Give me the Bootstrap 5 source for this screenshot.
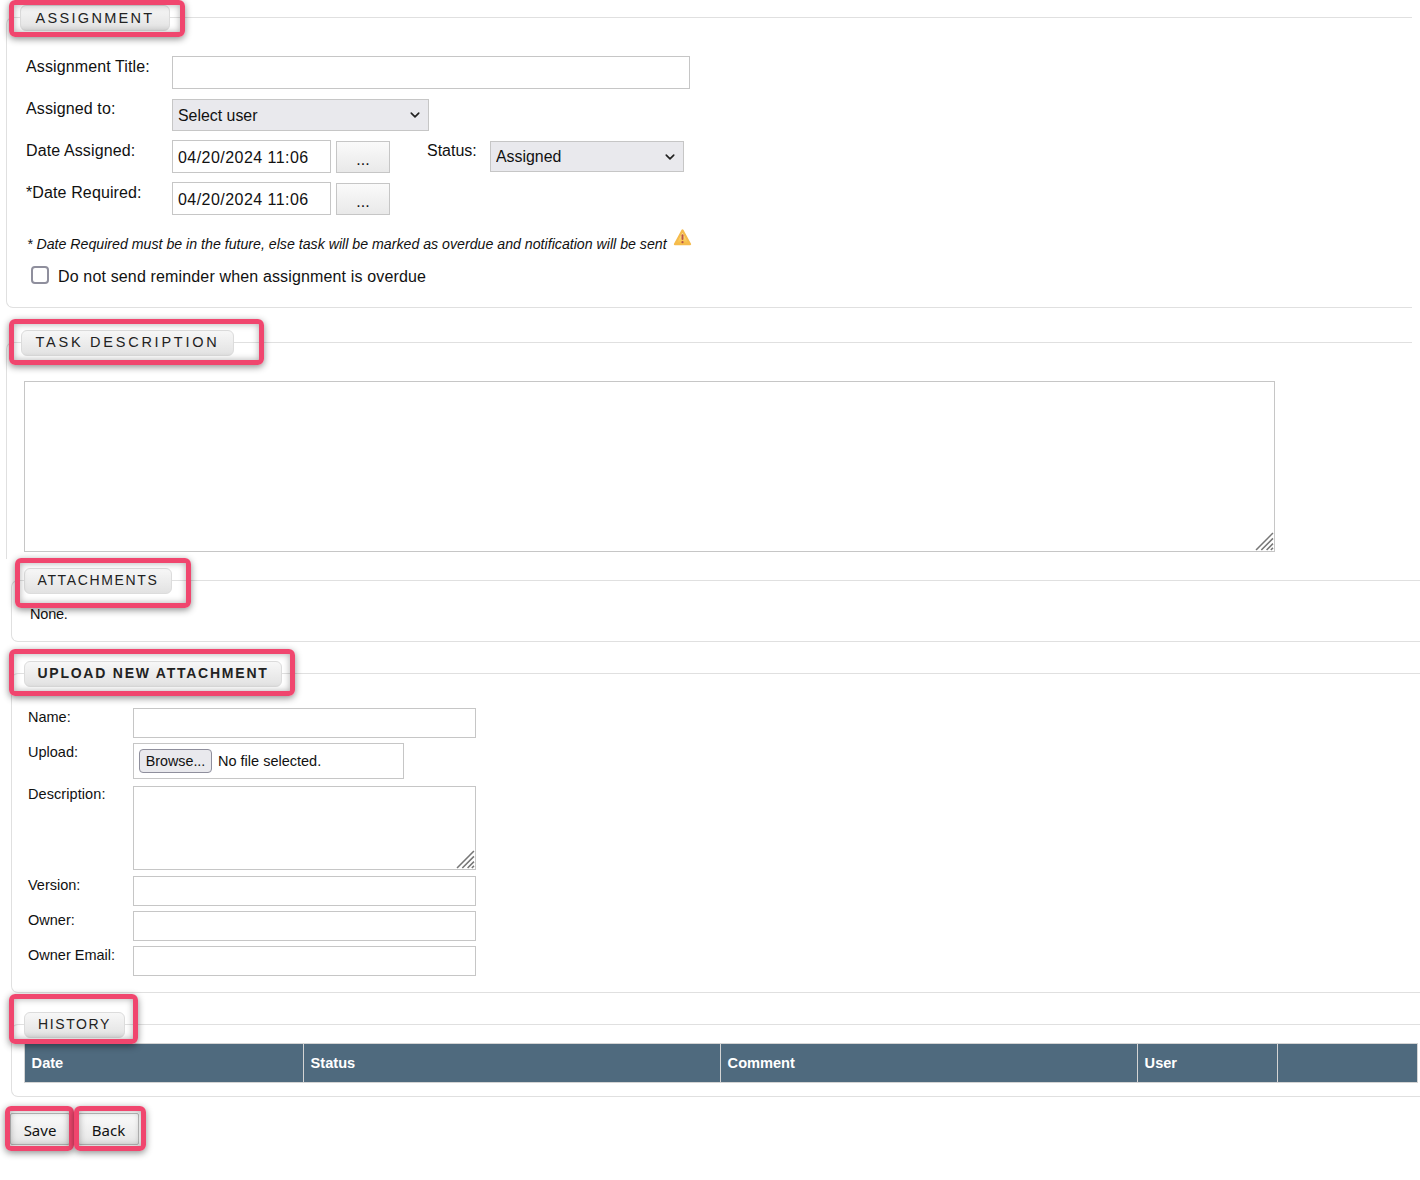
<!DOCTYPE html>
<html lang="en">
<head>
<meta charset="utf-8">
<title>Assignment</title>
<link href="https://cdn.jsdelivr.net/npm/bootstrap@5.3.0/dist/css/bootstrap.min.css" rel="stylesheet">
<style>
html,body{overflow-x:hidden}
body{background:#fff;color:#111;font-family:"Liberation Sans",Arial,sans-serif;font-size:16px;line-height:20px;height:1180px;overflow:hidden}
.fs{border:1px solid #e0e0e0;border-right:0;border-radius:7px 0 0 7px}
.fs-a{margin:17px 8px 0 6px;height:291px}
.fs-b{margin:34px 8px 0 6px;height:217px;border-bottom:0;border-radius:7px 0 0 0}
.fs-c{margin:21px 0 0 11px;height:62px;font-size:14.5px}
.fs-d{margin:31px 0 0 11px;height:320px;font-size:14.5px}
.fs-e{margin:31px 0 0 11px;height:73px}
.chip{position:relative;display:block;height:26px;margin-top:-13px;background:linear-gradient(#f7f7f7,#e2e2e2);border:1px solid #dcdcdc;border-radius:6px;line-height:23px;color:#222;text-align:center;white-space:nowrap;font-size:14px}
.chip-a{width:150px;margin-left:13px;font-size:14.5px;letter-spacing:2.3px;line-height:24px}
.chip-b{width:213px;margin-left:14px;font-size:14.5px;letter-spacing:2.75px}
.chip-c{width:148px;margin-left:12px;letter-spacing:1.65px}
.chip-d{width:258px;margin-left:12px;font-weight:700;letter-spacing:1.76px}
.chip-e{width:101px;margin-left:12px;letter-spacing:1.6px}
.mark-box{position:absolute;border:5px solid #f0466e;border-radius:6px;box-shadow:0 2px 7px rgba(0,0,0,.45),inset 0 0 7px rgba(0,0,0,.32);pointer-events:none}
.mk-a{left:-12px;right:-16px;top:-6px;bottom:-7px}
.mk-b{left:-13px;right:-31px;top:-12px;bottom:-10px}
.mk-c{left:-10px;right:-20px;top:-11px;bottom:-15px}
.mk-d{left:-16px;right:-14px;top:-13px;bottom:-10px}
.mk-e{left:-16px;right:-14px;top:-19px;bottom:-7px}
.mk-s{left:-6px;right:-5px;top:-8px;bottom:-7px}
.mk-k{left:-5px;right:-8px;top:-8px;bottom:-7px}
.fld{display:block;border:1px solid #c6c6c6;background:#fff;border-radius:0;padding:0 5px;font-family:inherit;color:#111;outline:0}
.date-f{width:159px;height:33px;letter-spacing:.45px;font-size:16px;padding-top:2px}
.title-f{width:518px;height:33px}
.lbl-a{width:146px;margin-left:19px;letter-spacing:.12px}
.lbl-down{padding-top:1px}
.sel-f{background-color:#e9e9ed;border:1px solid #c6c6c6;border-radius:0;height:32px;padding:1px 5px 0;font-size:15.9px;line-height:20px;color:#111;background-position:right 6px center;background-size:14px 10px;background-image:url("data:image/svg+xml,%3csvg xmlns='http://www.w3.org/2000/svg' viewBox='0 0 16 16'%3e%3cpath fill='none' stroke='%23222' stroke-linecap='round' stroke-linejoin='round' stroke-width='2.6' d='m2 5 6 6 6-6'/%3e%3c/svg%3e")}
.sel-user{width:257px}
.sel-status{width:194px;height:31px;margin-top:1px}
.pick-btn{width:54px;height:32px;margin:1px 0 0 5px;padding:6px 0 0;border:1px solid #c6c6c6;background:linear-gradient(#fafafa,#e9e9e9);font-size:16px;line-height:20px;color:#111;border-radius:0}
.status-l{margin-left:37px;width:63px;padding-top:1px}
.row-a1{margin-top:25px}
.row-a2{margin-top:10px}
.row-a3{margin-top:9px}
.note-t{margin:19px 0 0 20px;font-size:14.18px;font-style:italic;line-height:20px}
.warn-i{margin:-6px 0 0 6px}
.chk-row{margin:12px 0 0 24px;letter-spacing:.15px}
.chk-lab{margin-left:9px;padding-top:1px}
.chk-box{width:18px;height:18px;margin:-4px 0 0;border:2px solid #8f8f9d;border-radius:3px;box-shadow:none}
.grip-wrap{position:relative}
.grip-wrap textarea{resize:none;display:block}
.grip-big{width:1251px;margin:25px 0 0 17px}
.ta-big{width:1251px;height:171px}
.ta-small{width:343px;height:84px}
.grip{position:absolute;right:1px;bottom:1px;width:19px;height:19px;display:block}
.none-t{margin:10px 0 0 18px;letter-spacing:-.2px}
.lbl-d{width:105px;margin:-1px 0 0 16px}
.lbl-desc{margin-top:-2px;letter-spacing:.08px}
.fld-d{height:30px;width:343px}
.row-d1{margin-top:21px}
.row-d2{margin-top:5px}
.row-d3{margin-top:7px}
.row-d4{margin-top:6px}
.up-box{width:271px;height:36px}
.file-t{margin-left:6px}
.hist-head th{background:#4f6a7e;color:#fff;font-size:14.6px;font-weight:700;height:39px;padding:0 0 1px 6.6px;border:1px solid #d4d4d4;vertical-align:middle}
.hist-tbl{width:1393px;table-layout:fixed;margin:5px 0 0 12px;border-collapse:collapse}
.c-date{width:279px}
.c-wide{width:417px}
.c-user{width:140px}
.act-row{margin:16px 0 0 10px;gap:8px}
.act-btn{position:relative;height:32px;padding:1px 0 0;border:1px solid #bcbcbc;background:linear-gradient(#fafafa,#e6e6e6);border-radius:2px;font-family:"Noto Sans",sans-serif;font-size:15px;line-height:20px;color:#111}
.btn-save{width:60px}
.btn-back{width:61px}
.file-b{height:24px;width:73px;padding:0;border:1px solid #8f8f9d;background:#e9e9ed;border-radius:4px;font-size:14.3px;line-height:20px;color:#111}
</style>
</head>
<body class="m-0 p-0">
<div class="fs fs-a">
  <div class="chip chip-a">ASSIGNMENT<span class="mark-box mk-a"></span></div>
  <div class="d-flex row-a1"><div class="lbl-a lbl-down">Assignment Title:</div><input class="fld title-f" aria-label="Assignment Title"></div>
  <div class="d-flex row-a2"><div class="lbl-a">Assigned to:</div><select class="form-select sel-f sel-user"><option>Select user</option></select></div>
  <div class="d-flex row-a3">
    <div class="lbl-a lbl-down">Date Assigned:</div>
    <input class="fld date-f" value="04/20/2024 11:06" aria-label="Date Assigned">
    <button class="pick-btn" type="button">...</button>
    <div class="status-l">Status:</div>
    <select class="form-select sel-f sel-status"><option>Assigned</option></select>
  </div>
  <div class="d-flex row-a3">
    <div class="lbl-a lbl-down">*Date Required:</div>
    <input class="fld date-f" value="04/20/2024 11:06" aria-label="Date Required">
    <button class="pick-btn" type="button">...</button>
  </div>
  <div class="d-flex note-t"><span>* Date Required must be in the future, else task will be marked as overdue and notification will be sent</span>
    <svg class="warn-i" width="19" height="19" viewBox="0 0 20 19" aria-hidden="true"><defs><linearGradient id="w" x1="0" y1="0" x2="0" y2="1"><stop offset="0" stop-color="#fff0b0"/><stop offset="1" stop-color="#f6b93b"/></linearGradient></defs><path d="M10 2 18 16.5H2Z" fill="url(#w)" stroke="#f5bb4c" stroke-width="2.2" stroke-linejoin="round"/><rect x="9" y="6" width="2" height="6" rx="1" fill="#b8554a"/><circle cx="10" cy="14.4" r="1.2" fill="#b8554a"/></svg>
  </div>
  <div class="d-flex align-items-center chk-row"><input class="form-check-input chk-box" type="checkbox" id="c1"><label for="c1" class="chk-lab">Do not send reminder when assignment is overdue</label></div>
</div>

<div class="fs fs-b">
  <div class="chip chip-b">TASK DESCRIPTION<span class="mark-box mk-b"></span></div>
  <div class="grip-wrap grip-big"><textarea class="fld ta-big" aria-label="Task description"></textarea>
    <svg class="grip" viewBox="0 0 18 18" aria-hidden="true"><path d="M1 17 17 1M6 17 17 6M11 17 17 11M15 17l2-2" stroke="#777" stroke-width="1.5" fill="none"/></svg></div>
</div>

<div class="fs fs-c">
  <div class="chip chip-c">ATTACHMENTS<span class="mark-box mk-c"></span></div>
  <div class="none-t">None.</div>
</div>

<div class="fs fs-d">
  <div class="chip chip-d">UPLOAD NEW ATTACHMENT<span class="mark-box mk-d"></span></div>
  <div class="d-flex row-d1"><div class="lbl-d">Name:</div><input class="fld fld-d" aria-label="Name"></div>
  <div class="d-flex row-d2"><div class="lbl-d">Upload:</div><div class="fld up-box d-flex align-items-center"><button class="file-b" type="button">Browse...</button><span class="file-t">No file selected.</span></div></div>
  <div class="d-flex row-d3"><div class="lbl-d lbl-desc">Description:</div><div class="grip-wrap"><textarea class="fld ta-small" aria-label="Description"></textarea>
    <svg class="grip" viewBox="0 0 18 18" aria-hidden="true"><path d="M1 17 17 1M6 17 17 6M11 17 17 11M15 17l2-2" stroke="#777" stroke-width="1.5" fill="none"/></svg></div></div>
  <div class="d-flex row-d4"><div class="lbl-d">Version:</div><input class="fld fld-d" aria-label="Version"></div>
  <div class="d-flex row-d2"><div class="lbl-d">Owner:</div><input class="fld fld-d" aria-label="Owner"></div>
  <div class="d-flex row-d2"><div class="lbl-d">Owner Email:</div><input class="fld fld-d" aria-label="Owner Email"></div>
</div>

<div class="fs fs-e">
  <div class="chip chip-e">HISTORY<span class="mark-box mk-e"></span></div>
  <table class="hist-tbl">
    <colgroup><col class="c-date"><col class="c-wide"><col class="c-wide"><col class="c-user"><col class="c-user"></colgroup>
    <thead class="hist-head"><tr><th>Date</th><th>Status</th><th>Comment</th><th>User</th><th></th></tr></thead>
  </table>
</div>

<div class="d-flex act-row">
  <button class="act-btn btn-save" type="button">Save<span class="mark-box mk-s"></span></button>
  <button class="act-btn btn-back" type="button">Back<span class="mark-box mk-k"></span></button>
</div>
<script src="https://cdn.jsdelivr.net/npm/bootstrap@5.3.0/dist/js/bootstrap.bundle.min.js"></script>
</body>
</html>
